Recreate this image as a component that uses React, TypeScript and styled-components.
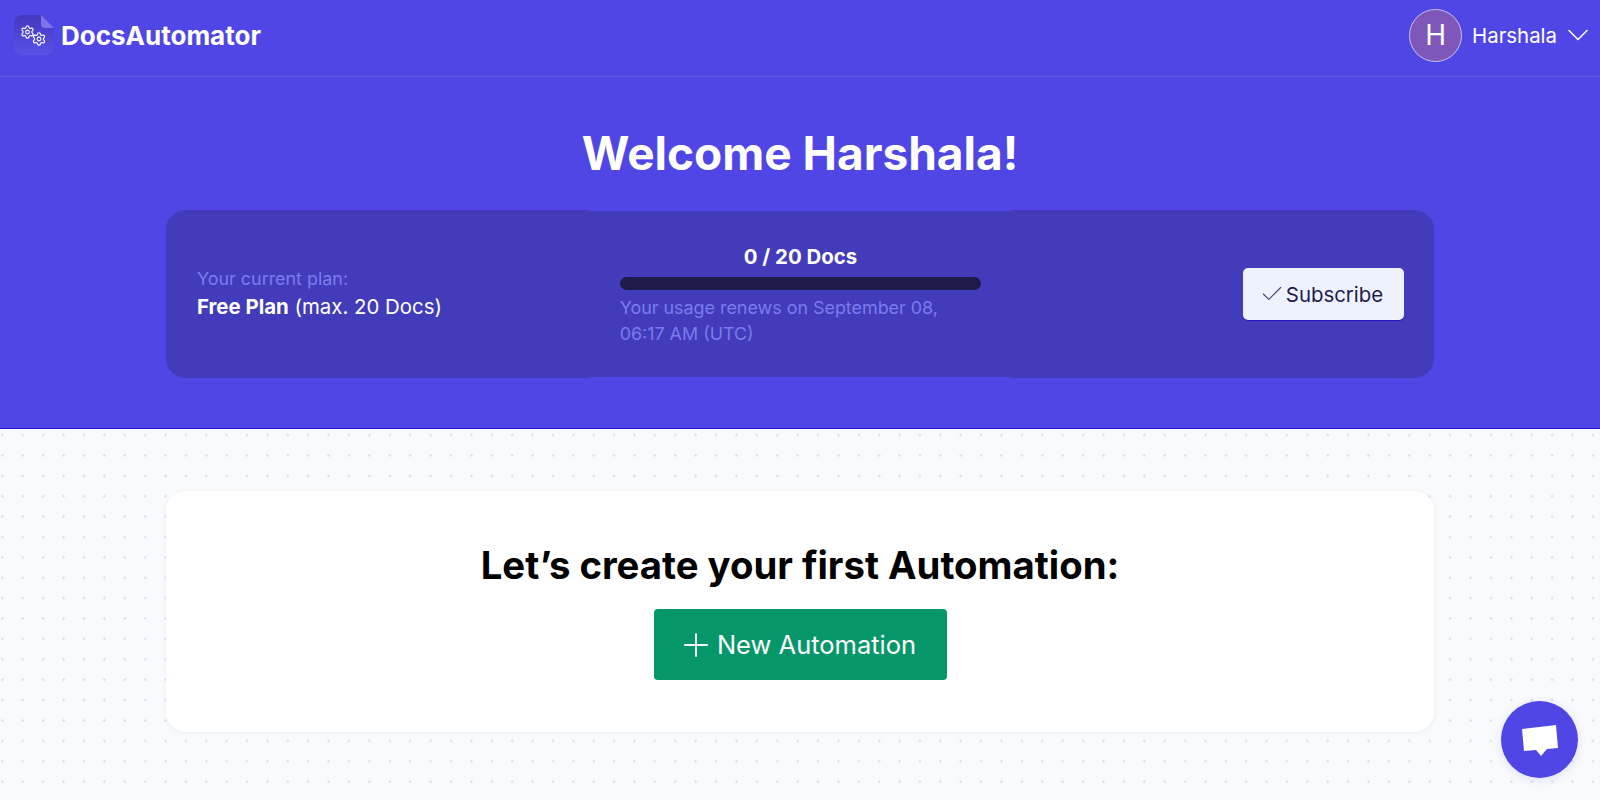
import styled, { createGlobalStyle } from "styled-components";
import { Check, ChevronDown, Plus, Settings } from "lucide-react";

const GlobalStyle = createGlobalStyle`
  html, body {
    margin: 0;
    padding: 0;
    height: 100%;
    overflow: hidden;
  }
  body {
    font-family: Inter, "Liberation Sans", sans-serif;
    background-color: #f8fafc;
  }
`;

function LogoMark() {
  return (
    <svg width="42" height="42" viewBox="0 0 42 42" fill="none">
      <defs>
        <linearGradient id="logoFill" x1="0" y1="0" x2="0" y2="1">
          <stop offset="0" stopColor="#4139bd" />
          <stop offset="1" stopColor="#5a52e8" />
        </linearGradient>
      </defs>
      <path
        d="M10 1H28L41 14V32C41 37.5 37.5 41 32 41H10C4.5 41 1 37.5 1 32V10C1 4.5 4.5 1 10 1Z"
        fill="url(#logoFill)"
      />
      <path d="M28 1L41 14H32C29.5 14 28 12.5 28 10Z" fill="#7a74ee" />
      <Settings x={7} y={10.5} width={15} height={15} color="#fff" strokeWidth={1.8} />
      <Settings x={18.5} y={17.5} width={15} height={15} color="#fff" strokeWidth={1.8} />
    </svg>
  );
}

function ChatIcon() {
  return (
    <svg width="38" height="32" viewBox="0 0 38 32">
      <path d="M1 4L35 0L37 23L26 24L20 31L15 25L3 26Z" fill="#fff" />
    </svg>
  );
}

function App() {
  return (
    <Page>
      <GlobalStyle />
      <Hero>
        <TopBar>
          <Brand>
            <LogoMark />
            <BrandName>DocsAutomator</BrandName>
          </Brand>
          <UserMenu>
            <Avatar>H</Avatar>
            <UserName>Harshala</UserName>
            <ChevronDown size={36} strokeWidth={1} color="#fff" />
          </UserMenu>
        </TopBar>
        <Welcome>Welcome Harshala!</Welcome>
        <PlanPanel>
          <PlanCell>
            <MutedText>Your current plan:</MutedText>
            <PlanName>
              <strong>Free Plan</strong> (max. 20 Docs)
            </PlanName>
          </PlanCell>
          <UsageCell>
            <UsageCount>0 / 20 Docs</UsageCount>
            <UsageBar />
            <MutedText>Your usage renews on September 08, 06:17 AM (UTC)</MutedText>
          </UsageCell>
          <SubscribeCell>
            <SubscribeButton>
              <Check size={26} strokeWidth={1} color="#45436f" />
              Subscribe
            </SubscribeButton>
          </SubscribeCell>
        </PlanPanel>
      </Hero>
      <Content>
        <StartCard>
          <StartTitle>Let’s create your first Automation:</StartTitle>
          <NewButton>
            <Plus size={38} strokeWidth={1.2} color="#fff" />
            New Automation
          </NewButton>
        </StartCard>
      </Content>
      <ChatButton>
        <ChatIcon />
      </ChatButton>
    </Page>
  );
}

const Page = styled.div`
  height: 100vh;
  display: flex;
  flex-direction: column;
`;

const Hero = styled.header`
  height: 429px;
  box-sizing: border-box;
  flex-shrink: 0;
  background: #4f46e5;
  border-bottom: 1px solid #2a10d8;
`;

const TopBar = styled.div`
  height: 77px;
  box-sizing: border-box;
  padding: 0 4px 6px 13px;
  display: flex;
  align-items: center;
  justify-content: space-between;
  border-bottom: 1px solid #6159ea;
`;

const Brand = styled.div`
  display: flex;
  align-items: center;
  gap: 6px;
`;

const BrandName = styled.span`
  color: #fff;
  font-size: 26px;
  font-weight: 700;
`;

const UserMenu = styled.div`
  display: flex;
  align-items: center;
`;

const Avatar = styled.div`
  width: 53px;
  height: 53px;
  box-sizing: border-box;
  border-radius: 50%;
  border: 1px solid #c9c3ee;
  background: #7e57b8;
  color: #fff;
  font-size: 28px;
  display: flex;
  align-items: center;
  justify-content: center;
  margin-right: 10px;
`;

const UserName = styled.span`
  color: #fff;
  font-size: 20.4px;
  margin-right: 3px;
`;

const Welcome = styled.h1`
  margin: 45px 0 0;
  height: 62px;
  color: #fff;
  font-size: 46px;
  line-height: 62px;
  font-weight: 700;
  text-align: center;
`;

const PlanPanel = styled.section`
  width: 1268px;
  height: 168px;
  margin: 26px auto 0;
  display: grid;
  grid-template-columns: repeat(3, 1fr);
`;

const PlanCell = styled.div`
  background: #423bba;
  border-radius: 20px 0 0 20px;
  padding: 0 30px 2px 31px;
  display: flex;
  flex-direction: column;
  justify-content: center;
  gap: 2px;
`;

const UsageCell = styled.div`
  background: #423bba;
  margin: 1px 0;
  padding: 2px 30px 0 31px;
  display: flex;
  flex-direction: column;
  justify-content: center;
`;

const SubscribeCell = styled.div`
  background: #423bba;
  border-radius: 0 20px 20px 0;
  padding-right: 30px;
  display: flex;
  align-items: center;
  justify-content: flex-end;
`;

const MutedText = styled.div`
  color: #7a7cec;
  font-size: 17.9px;
  line-height: 25.5px;
`;

const PlanName = styled.div`
  color: #fff;
  font-size: 20.4px;
  line-height: 27.5px;

  strong {
    font-weight: 700;
  }
`;

const UsageCount = styled.div`
  color: #fff;
  font-size: 20.4px;
  line-height: 26px;
  font-weight: 700;
  text-align: center;
  margin-bottom: 7px;
`;

const UsageBar = styled.div`
  height: 13px;
  border-radius: 7px;
  background: #1e1b4b;
  margin-bottom: 5px;
`;

const SubscribeButton = styled.button`
  width: 161px;
  height: 52px;
  border: none;
  border-radius: 5px;
  background: #eef2ff;
  box-shadow: 0 1px 0 #2a10c8;
  color: #1e1b4b;
  font-family: inherit;
  font-size: 20.4px;
  display: flex;
  align-items: center;
  justify-content: center;
  gap: 1px;
  padding: 0 5px 0 0;
`;

const Content = styled.main`
  flex: 1;
  background-color: #f8fafc;
  background-image: radial-gradient(#dcdcf8 1.2px, transparent 1.4px);
  background-size: 20.4px 20.4px;
  background-position: -7.8px -4.2px;
  padding-top: 62px;
`;

const StartCard = styled.section`
  width: 1268px;
  height: 241px;
  margin: 0 auto;
  background: #fff;
  border-radius: 20px;
  box-shadow: 0 1px 4px rgba(148, 163, 184, 0.12);
  display: flex;
  flex-direction: column;
  align-items: center;
`;

const StartTitle = styled.h2`
  margin: 46px 0 0;
  height: 72px;
  font-size: 38.3px;
  line-height: 56px;
  font-weight: 700;
  color: #000;
`;

const NewButton = styled.button`
  width: 293px;
  height: 71px;
  border: none;
  border-radius: 4px;
  background: #059669;
  color: #fff;
  font-family: inherit;
  font-size: 25.5px;
  display: flex;
  align-items: center;
  justify-content: center;
  gap: 2px;
  padding: 0 7px 0 0;
`;

const ChatButton = styled.button`
  position: fixed;
  right: 22px;
  bottom: 22px;
  width: 77px;
  height: 77px;
  border: none;
  border-radius: 50%;
  background: #4f46e5;
  box-shadow: 0 2px 10px rgba(79, 70, 229, 0.15);
  display: flex;
  align-items: center;
  justify-content: center;
  padding: 2px 0 0;
`;

export default App;
